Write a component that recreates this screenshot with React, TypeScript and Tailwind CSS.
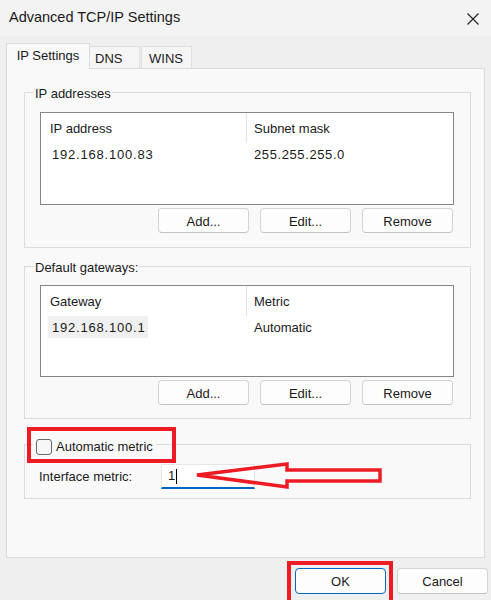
import React from "react";
import clsx from "clsx";

function DlgButton({ label, primary = false, className }: { label: string; primary?: boolean; className?: string }) {
  return (
    <button
      type="button"
      className={clsx(
        "w-[91px] rounded-[4px] border bg-[#fdfdfd] pt-px text-[13px] leading-none text-[#1a1a1a]",
        primary ? "border-[#0067c0]" : "border-[#d3d3d3] border-b-[#c2c2c2]",
        className
      )}
    >
      {label}
    </button>
  );
}

interface ListViewProps {
  columns: [string, string];
  row: [string, string];
  selected?: boolean;
  className?: string;
}

function ListView({ columns, row, selected = false, className }: ListViewProps) {
  return (
    <div className={clsx("ml-[15px] w-[414px] border border-[#858585] bg-white", className)}>
      {/* header */}
      <div className="flex h-[30px] items-center">
        <div className="w-[205px] pl-[9px] pt-[2px]">{columns[0]}</div>
        <div className="h-[30px] w-px bg-[#e5e5e5]" />
        <div className="pl-[7px] pt-[2px]">{columns[1]}</div>
      </div>
      {/* single row */}
      <div className="flex h-[22px] items-center">
        <div className="w-[206px] pl-[7px]">
          <span
            className={clsx(
              "inline-block h-[22px] w-[100px] pl-[4px] pt-px leading-[22px] tracking-[0.8px]",
              selected && "bg-[#f0f0f0]"
            )}
          >
            {row[0]}
          </span>
        </div>
        <div className={clsx("pl-[7px] pt-[2px]", row[1].match(/\d/) && "tracking-[0.6px]")}>{row[1]}</div>
      </div>
    </div>
  );
}

function ButtonRow() {
  return (
    <div className="mr-[17px] mt-[3px] flex justify-end gap-[11px]">
      <DlgButton label="Add..." className="h-[25px]" />
      <DlgButton label="Edit..." className="h-[25px]" />
      <DlgButton label="Remove" className="h-[25px]" />
    </div>
  );
}

export default function App() {
  return (
    <div className="relative h-[600px] w-[491px] overflow-hidden bg-[#efefef] font-['Liberation_Sans',Arial,sans-serif] text-[13px] text-[#1a1a1a]">
      {/* title bar */}
      <div className="flex h-[36px] items-center justify-between bg-[#f3f3f3] pl-[9px] pr-[12px]">
        <span className="text-[14.5px] text-[#1a1a1a]">Advanced TCP/IP Settings</span>
        <svg width="12" height="12" viewBox="0 0 12 12" className="mt-px">
          <path d="M0.5 0.5 L11.5 11.5 M11.5 0.5 L0.5 11.5" stroke="#1f1f1f" strokeWidth="1.1" fill="none" />
        </svg>
      </div>

      {/* tabs */}
      <div className="mt-[7px] flex h-[25px] items-end px-[6px]">
        <div className="relative z-10 -mb-px flex h-[26px] w-[84px] items-center justify-center border border-b-0 border-[#dadada] bg-[#f9f9f9] pb-px">
          IP Settings
        </div>
        <div className="flex h-[22px] w-[50px] items-center border-r border-t border-[#e0e0e0] bg-[#f5f5f5] pl-[5px] pt-[2px]">
          DNS
        </div>
        <div className="ml-px flex h-[22px] w-[51px] items-center border-l border-r border-t border-[#e0e0e0] bg-[#f5f5f5] pl-[7px] pt-[2px]">
          WINS
        </div>
      </div>

      {/* tab page */}
      <div className="mx-[6px] h-[490px] border border-[#dadada] bg-[#f9f9f9] pl-[17px] pt-[23px]">
        {/* IP addresses */}
        <div className="w-[447px] border border-[#dcdcdc] pb-[14px]">
          <div className="-mt-[8px] ml-[9px] w-fit bg-[#f9f9f9] px-px pt-px leading-[15px]">IP addresses</div>
          <ListView
            className="mt-[11px] h-[93px]"
            columns={["IP address", "Subnet mask"]}
            row={["192.168.100.83", "255.255.255.0"]}
          />
          <ButtonRow />
        </div>

        {/* Default gateways */}
        <div className="mt-[18px] w-[447px] border border-[#dcdcdc] pb-[13px]">
          <div className="-mt-[8px] ml-[9px] w-fit bg-[#f9f9f9] px-px pt-px leading-[15px]">Default gateways:</div>
          <ListView
            className="mt-[10px] h-[92px]"
            columns={["Gateway", "Metric"]}
            row={["192.168.100.1", "Automatic"]}
            selected
          />
          <ButtonRow />
        </div>

        {/* metric */}
        <div className="mt-[25px] w-[447px] border border-[#dcdcdc] pb-[9px]">
          <div className="-mt-[7px] ml-[8px] flex w-fit items-center gap-[4px] bg-[#f9f9f9] px-[3px]">
            <span className="h-[16px] w-[16px] rounded-[3px] border border-[#6a6a6a] bg-[#f7f7f7]" />
            <span className="pt-px leading-[16px]">Automatic metric</span>
          </div>
          <div className="ml-[14px] mt-[9px] flex items-center">
            <span className="w-[122px] pt-px">Interface metric:</span>
            <div className="flex h-[25px] w-[94px] items-center border border-b-2 border-[#e5e5e5] border-b-[#0067c0] bg-white pl-[6px]">
              <span>1</span>
              <span className="ml-px h-[15px] w-px bg-black" />
            </div>
          </div>
        </div>
      </div>

      {/* dialog buttons */}
      <div className="mt-[10px] flex justify-end gap-[11px] pr-[3px]">
        <DlgButton label="OK" primary className="h-[26px]" />
        <DlgButton label="Cancel" className="h-[26px]" />
      </div>

      {/* red annotations drawn over the screenshot */}
      <div className="pointer-events-none absolute left-[27px] top-[427px] h-[36px] w-[149px] border-[4px] border-[#ed1c24]" />
      <div className="pointer-events-none absolute left-[287px] top-[561px] h-[45px] w-[106px] border-[4px] border-[#ed1c24]" />
      <svg className="pointer-events-none absolute left-[190px] top-[458px]" width="196" height="34" viewBox="0 0 196 34">
        <polygon
          points="7,17 97,6 97,12 190,12 190,23 97,23 97,29"
          fill="none"
          stroke="#ed1c24"
          strokeWidth="3.5"
          strokeLinejoin="miter"
        />
      </svg>
    </div>
  );
}
